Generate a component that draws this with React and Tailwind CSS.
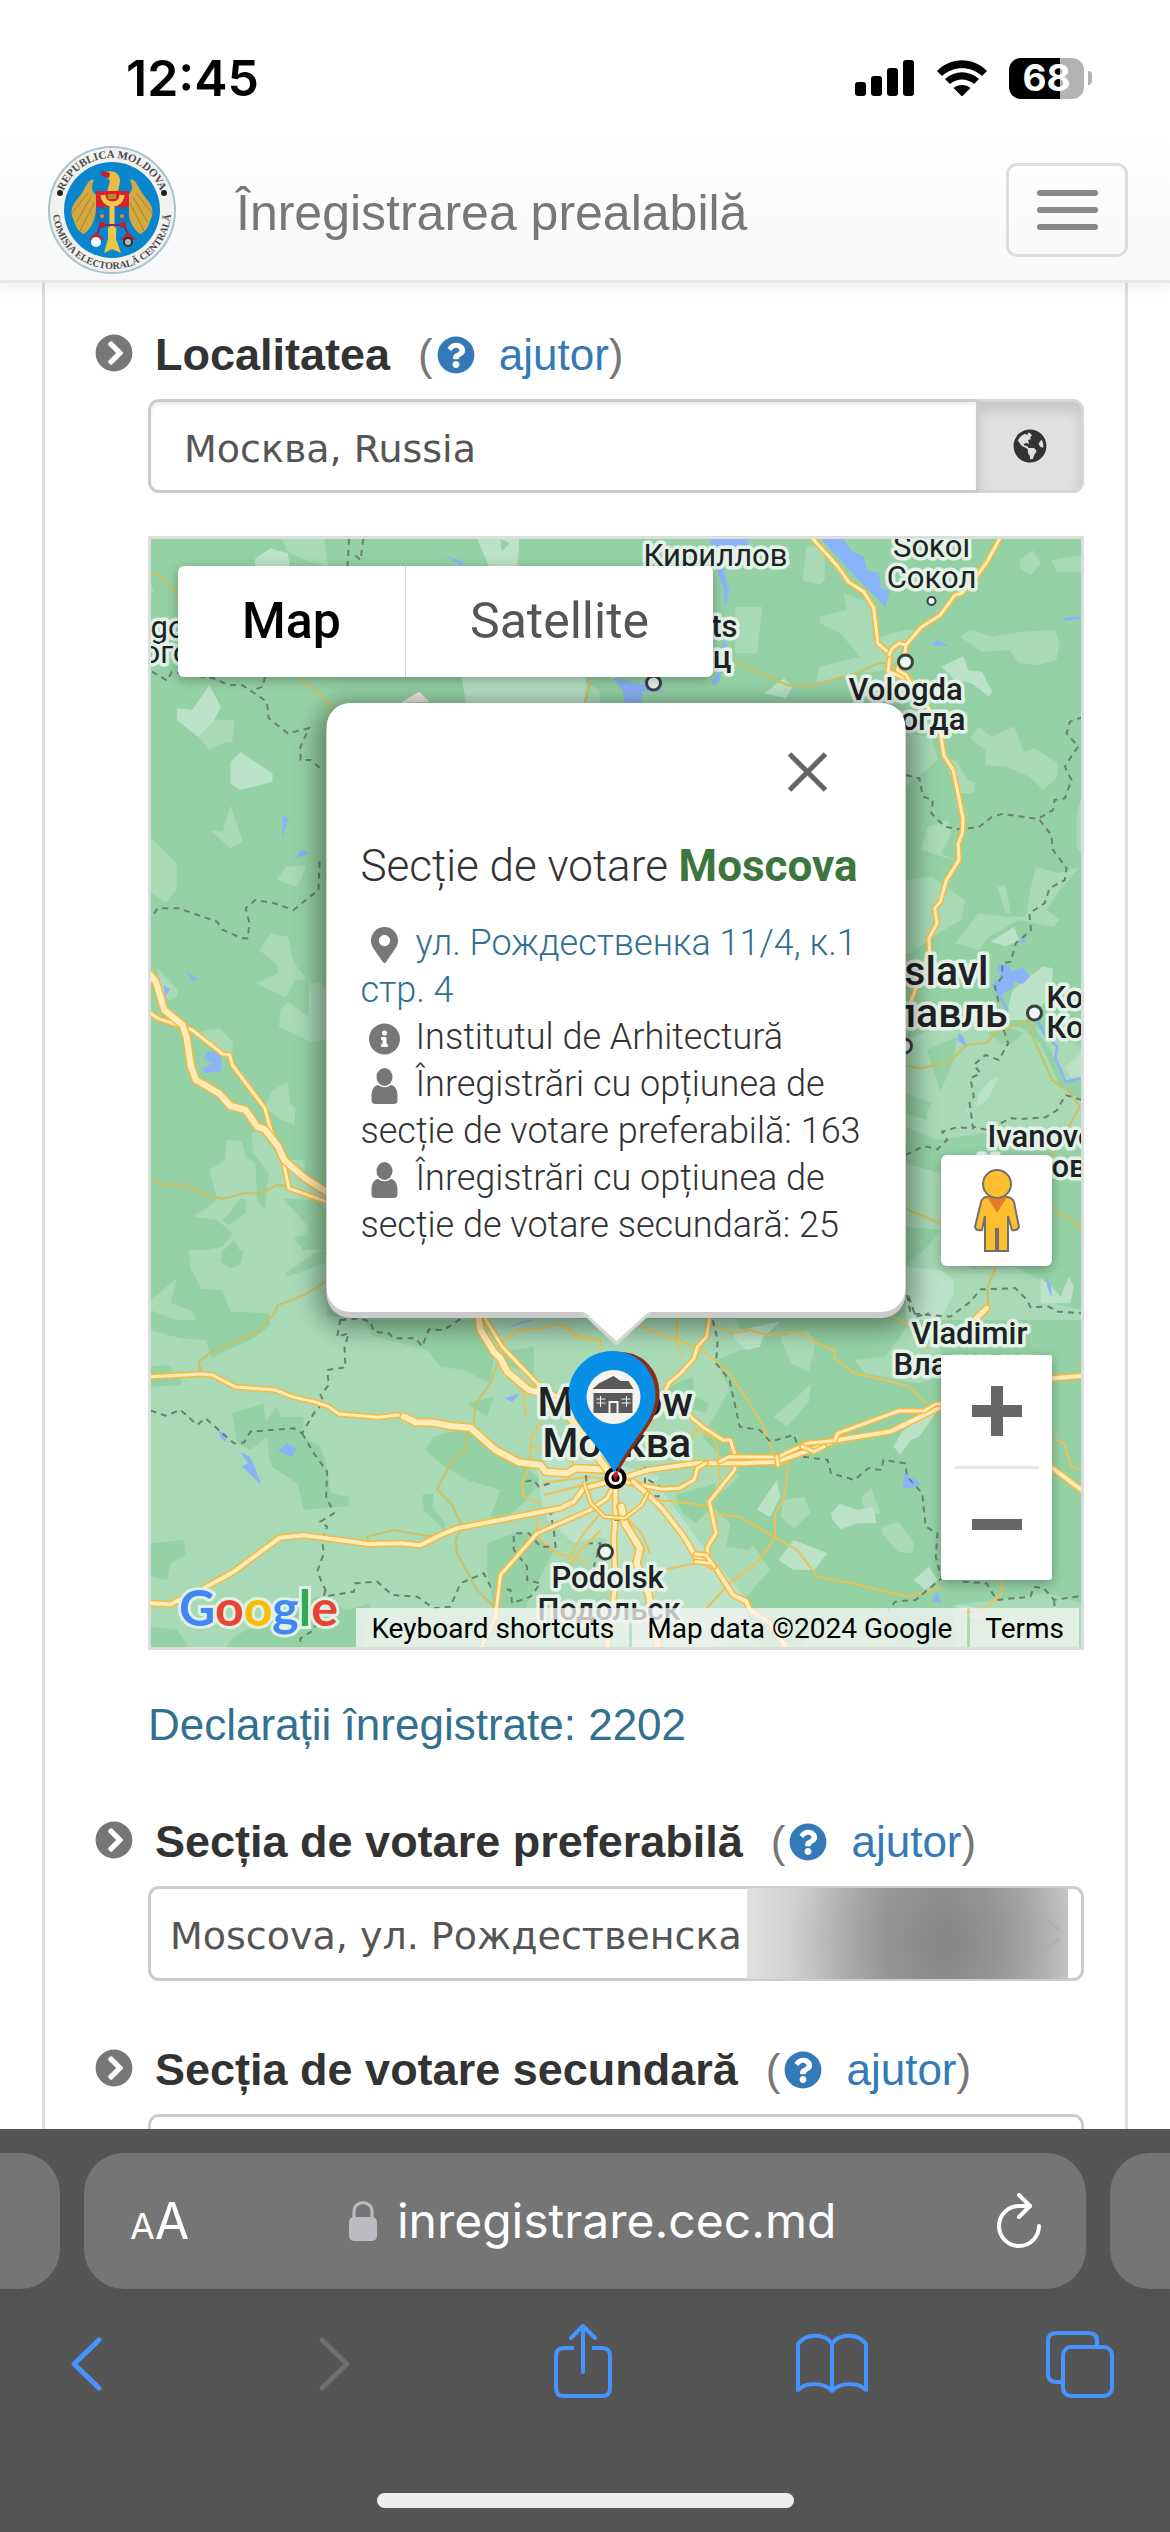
import React, { useState } from 'react';
import { FaChevronCircleRight, FaQuestionCircle, FaGlobeAmericas, FaInfoCircle, FaMapMarkerAlt } from 'react-icons/fa';

const ROAD_CASE = '#f5b942';
const ROAD_FILL = '#ffecb8';

function Road({ d, w = 3 }) {
  return (
    <g fill="none" strokeLinejoin="round" strokeLinecap="round">
      <path d={d} stroke={ROAD_CASE} strokeWidth={w + 3} vectorEffect="non-scaling-stroke" />
      <path d={d} stroke={ROAD_FILL} strokeWidth={w} vectorEffect="non-scaling-stroke" />
    </g>
  );
}

function MinorRoad({ d }) {
  return <path d={d} fill="none" stroke="#cdbf63" strokeWidth="2" vectorEffect="non-scaling-stroke" />;
}

function CityRoad({ d }) {
  return <path d={d} fill="none" stroke="#ecc155" strokeWidth="2" vectorEffect="non-scaling-stroke" />;
}

function Border({ d }) {
  return (
    <path
      d={d}
      fill="none"
      stroke="#69806f"
      strokeWidth="2"
      strokeDasharray="6 5"
      vectorEffect="non-scaling-stroke"
    />
  );
}

function MapDrawing() {
  return (
    <svg
      className="absolute inset-0 h-full w-full"
      viewBox="150 539 931 1108"
      preserveAspectRatio="xMidYMid slice"
      aria-hidden="true"
    >
      <rect x="0" y="400" width="1300" height="1400" fill="#94d2a5" />

      {/* north west */}
      <g transform="translate(140 520) scale(0.3827 0.3333)">
        <g fill="#a8dab5">
          <path d="M370 57L480 57L490 138L430 120L385 95Z" />
          <path d="M190 600L245 600L240 665L215 670L180 690L150 650Z" />
          <path d="M235 855L268 965L235 985L180 930L215 935Z" />
          <path d="M26 950L95 1030L95 1110L65 1150L26 1115Z" />
          <path d="M380 1040L435 1035L410 1100L355 1080Z" />
          <path d="M1150 480L1200 510L1200 548L1100 548Z" />
          <path d="M26 190L35 215L26 220Z" />
        </g>
        <g fill="#bbe2c6">
          <path d="M300 138L300 115L340 85L385 100L390 138Z" />
          <path d="M880 57L990 57L985 138L910 138Z" />
          <path d="M180 495L210 560L190 605L150 650L95 600L95 565L135 570Z" />
          <path d="M262 697L345 760L345 785L260 810L235 790L235 725Z" />
          <path d="M840 470L1165 470L1160 548L850 548Z" />
        </g>
        <path d="M940 57L965 70L945 95Z" fill="#94d2a5" />
        <path d="M680 548L728 515L755 545Z" fill="#f3e7df" />
        <g fill="#8ab4f8">
          <path d="M372 885L387 895L370 955Z" />
          <path d="M403 1018L420 990L443 998Z" />
          <path d="M795 105L845 125L840 138Z" />
          <path d="M1230 470L1300 490L1375 515L1310 515L1310 548L1265 548L1260 510Z" />
        </g>
        <Border d="M30 455L70 482L82 455L190 475L230 495L265 495L330 545L335 595L385 640L440 625L418 680L418 720L445 720L475 750" />
        <Border d="M545 57L541 138M582 57L575 120L555 100M325 470L320 500L295 510" />
        <Border d="M468 1025L465 1110L400 1170L350 1150L300 1140L275 1165L285 1210L280 1255L265 1255L215 1230L200 1205L100 1165L45 1165L30 1190" />
        <MinorRoad d="M26 160L45 160L100 230M415 470L430 490L455 505L505 570M1180 475L1160 548" />
      </g>

      {/* north east */}
      <g transform="translate(640 520) scale(0.3381 0.3333)">
        <g fill="#a8dab5">
          <path d="M490 80L545 75L545 180L530 195L480 180Z" />
          <path d="M600 220L680 250L690 360L740 340L790 330L830 325L780 375L740 450L640 460L520 490L530 440L650 410L590 340L530 310L530 290L610 270Z" />
          <path d="M280 260L360 260L345 400L280 400Z" />
          <path d="M1120 120L1160 90L1185 130L1155 165L1125 150Z" />
          <path d="M1215 120L1305 105L1305 155L1230 155Z" />
          <path d="M945 350L975 330L1040 350L1130 335L1225 330L1240 370L1230 420L1175 435L1120 430L1090 390L1010 395Z" />
          <path d="M975 655L1000 620L1040 650L1105 618L1120 660L1135 695L1165 685L1235 730L1230 775L1190 808L1150 770L1080 740L1020 735L1020 690Z" />
          <path d="M785 640L860 650L880 720L785 800Z" />
          <path d="M930 720L970 780L990 790L985 820L935 820L900 720Z" />
          <path d="M850 920L910 900L920 940L890 1000L940 1025L830 990Z" />
          <path d="M785 1080L860 1070L960 1140L950 1200L880 1240L800 1300L785 1300Z" />
          <path d="M1055 1100L1080 1095L1095 1180L1080 1180Z" />
          <path d="M1170 1040L1235 1060L1300 1040L1240 1110L1200 1170L1240 1200L1220 1220L1120 1200L1030 1250L1000 1290L930 1270L1000 1180L1080 1190L1140 1190L1155 1100Z" />
          <path d="M1290 880L1305 830L1305 1000L1290 985Z" />
        </g>
        <g fill="#bbe2c6">
          <path d="M890 440L955 408L970 450L1010 455L1040 515L1030 530L980 490L930 480Z" />
          <path d="M365 520L425 475L450 500L430 535Z" />
          <path d="M1035 1265L1105 1220L1120 1260L1080 1280Z" />
          <path d="M1190 1340L1220 1345L1215 1430L1140 1500L1080 1500L1100 1410Z" />
        </g>
        <g fill="#8ab4f8">
          <path d="M535 57L600 57L622 90L660 110L670 150L705 160L712 205L737 212L725 262L680 215L640 175Z" />
          <path d="M205 57L320 57L315 90L245 140L262 215L250 265L245 200L225 150Z" />
          <path d="M245 360L258 375L240 400L235 480L222 495L208 490L230 455Z" />
          <path d="M862 372L880 360L910 378L875 378Z" />
          <path d="M1250 295L1275 290L1305 290L1305 297L1255 302Z" />
          <path d="M1055 1332L1090 1335L1095 1355L1130 1342L1152 1370L1130 1392L1105 1385L1100 1405L1065 1425L1092 1475L1080 1470L1040 1395L1065 1370Z" />
          <path d="M1120 1265L1145 1235L1135 1270Z" />
        </g>
        <MinorRoad d="M270 430L300 430L325 450L440 497L520 493L640 460L705 430L740 428L760 440" />
        <Border d="M785 765L825 775L835 830L865 840L860 880L900 920L940 928L1000 922L1040 890L1070 882L1175 897L1220 870L1225 840L1255 835L1275 780L1255 740L1280 700L1295 680L1260 640L1270 605L1305 592" />
        <Border d="M1180 900L1215 945L1220 990L1260 1045L1255 1080L1210 1105L1195 1150L1150 1180L1155 1230L1110 1270L1095 1325L1070 1330L1070 1370L1048 1400L1060 1450" />
        <Road d="M510 57L580 135L615 185L660 215L690 265L702 370L738 402L732 455L800 480L885 620L897 705L925 750L954 895L952 940L940 970L942 1020L905 1080L887 1145L870 1165L877 1210L853 1255L855 1290L800 1445" />
        <Road d="M1062 57L1025 125L990 175L950 220L930 225L887 285L830 322L785 375L765 370L745 385L735 405M785 375L782 400" />
        <Road d="M765 435L760 450L785 465L800 490" />
      </g>

      {/* west */}
      <g transform="translate(140 900) scale(0.3827 0.3333)">
        <g fill="#a8dab5">
          <path d="M310 150L340 100L385 110L400 185L432 235L430 240L405 240L380 293L303 250L360 220L358 195Z" />
          <path d="M45 205L98 270L95 290L75 303L60 280L45 260Z" />
          <path d="M385 305L440 350L440 255L470 245L486 270L486 420L445 425L362 380L365 330Z" />
          <path d="M155 395L205 385L242 425L240 460L220 470L190 440L160 420Z" />
          <path d="M385 545L390 610L405 625L403 675L360 655L325 620L345 570Z" />
          <path d="M225 718L265 725L275 770L300 790L305 900L325 930L335 820L295 760L290 700L310 690L370 780L430 780L430 830L486 890L486 1260L150 1260L148 1235L110 1200L165 1180L130 1100L130 1060L215 1040L240 1000L200 960L138 950L200 900L180 810L220 780Z" />
          <path d="M26 1200L95 1135L80 1200L150 1230L145 1260L26 1260Z" />
        </g>
        <g fill="#94d2a5">
          <path d="M275 900L275 940L230 975L215 960L240 930L260 895Z" />
          <path d="M245 1020L270 1080L255 1110L190 1090L210 1060Z" />
          <path d="M375 1115L430 1060L400 1010L486 1000L486 1090L395 1130Z" />
          <path d="M370 895L460 900L486 930L486 1010L430 1020L440 980L400 930Z" />
        </g>
        <g fill="#8ab4f8">
          <path d="M118 215L150 235L140 247Z" />
          <path d="M60 256L77 268L65 290Z" />
          <path d="M175 455L210 450L212 513L170 520L160 505L190 490L165 473Z" />
          <path d="M26 50L33 50L26 75Z" />
        </g>
        <MinorRoad d="M26 835L60 855L105 852L160 880L215 897L270 880L318 880L355 855L385 858M486 1140L440 1180L415 1185L355 1215L330 1260" />
        <Road d="M26 340L45 355L110 380L135 390L215 462L233 465L240 495L325 625L340 690L370 770L388 865L486 905" w={3} />
        <Road d="M26 225L40 245L62 330L110 375L120 410L132 500L145 540L205 580L235 618L275 630L305 680L325 688L360 740L375 780L430 835L486 875" w={6} />
      </g>

      {/* east */}
      <g transform="translate(740 900) scale(0.3333)">
        <g fill="#a8dab5">
          <path d="M495 420L640 360L840 380L900 430L960 560L1024 600L1024 690L980 720L800 720L730 700L590 720L495 680L495 640L560 660L550 610L495 590Z" />
          <path d="M880 380L1024 440L1024 540L970 545L930 450Z" />
          <path d="M495 790L600 820L600 990L495 980Z" />
          <path d="M560 1040L600 990L605 1060L700 1110L820 1100L900 1140L900 1200L1024 1230L1024 1260L495 1260L495 1100Z" />
        </g>
        <g fill="#bbe2c6">
          <path d="M975 500L1024 455L1024 530L990 530Z" />
          <path d="M775 530L740 600L705 625L715 580L750 540Z" />
          <path d="M495 1100L600 1110L640 1140L640 1180L600 1260L520 1260L495 1240Z" />
          <path d="M900 1135L935 1160L960 1190L985 1130L1000 1160L990 1210L900 1210Z" />
          <path d="M675 620L690 645L680 640Z" />
        </g>
        <g fill="#94d2a5">
          <path d="M560 450L650 410L640 480L600 575Z" />
          <path d="M740 400L800 380L850 400L800 440Z" />
          <path d="M495 580L575 610L545 655L495 640Z" />
        </g>
        <g fill="#8ab4f8">
          <path d="M655 398L668 410L680 442L652 422Z" />
          <path d="M918 1125L932 1160L934 1192L920 1160Z" />
        </g>
        <path d="M890 355L910 400L950 440L945 475L975 545L1024 535" fill="none" stroke="#8ab4f8" strokeWidth="8" />
        <MinorRoad d="M495 497L540 505L625 487L678 435L740 428L765 397L865 360L872 400L935 540L990 580L1018 620L990 670L935 770M495 925L540 945L605 972M935 925L1010 970L1024 1000M768 1097L742 1160L742 1225" />
        <Border d="M790 390L803 430L775 480L735 465L700 495L720 520L690 535L700 590L687 605L697 680L740 690L810 655L840 657L915 652L950 630L975 585L1024 600" />
        <Border d="M495 765L550 738L590 748L620 720L605 695L650 682L700 685" />
        <Border d="M500 1185L510 1240L570 1245L630 1250L690 1205L720 1168L825 1165L860 1200L870 1222L925 1220L950 1235L1024 1240" />
        <Road d="M740 1225L705 1260" w={4} />
      </g>

      {/* fields and forest in the south east */}
      <g transform="translate(560 1250) scale(0.3381 0.3333)">
        <g fill="#a8dab5">
          <path d="M0 207L520 207L560 290L460 330L500 420L420 560L530 680L440 760L580 900L620 960L540 1050L600 1200L0 1200Z" />
        </g>
        <g fill="#94d2a5">
          <path d="M340 735L460 700L450 770L400 820L360 790Z" />
          <path d="M300 420L390 380L400 440L440 460L430 490L330 460Z" />
          <path d="M510 780L590 840L560 900L490 890Z" />
        </g>
        <g fill="#a8dab5">
          <path d="M650 260L730 240L755 280L735 365L680 340Z" />
          <path d="M700 440L740 402L735 455L670 530L630 500Z" />
          <path d="M950 830L1000 815L1045 880L1040 910L1000 905L950 850Z" />
          <path d="M660 750L720 740L740 790L690 835L650 800Z" />
          <path d="M1040 210L1127 300L1127 380L1060 400L900 370L870 330L960 320Z" />
          <path d="M890 740L920 715L945 790L900 795Z" />
          <path d="M1160 1065L1440 1030L1541 1060L1541 1200L1170 1200Z" />
          <path d="M700 1200L760 1120L940 1090L1010 1140L990 1200Z" />
        </g>
        <g fill="#bbe2c6">
          <path d="M510 245L620 220L650 215L600 260L590 290L550 300L515 270Z" />
          <path d="M800 790L825 762L880 780L925 770L935 820L880 820L830 838L805 810Z" />
          <path d="M645 930L690 870L790 910L750 960L690 960Z" />
          <path d="M985 590L1010 545L1060 510L1110 490L1060 560L1035 570L1005 615Z" />
          <path d="M1045 990L1090 950L1115 990L1080 1020Z" />
          <path d="M170 700L300 720L400 860L470 950L560 1060L540 1160L440 1200L200 1200L130 900Z" />
          <path d="M580 780L640 690L650 740L620 800Z" />
          <path d="M1170 1065L1220 1070L1270 1110L1200 1100Z" />
        </g>
        <g fill="#8ab4f8">
          <path d="M1018 668L1070 705L1012 718Z" />
          <path d="M1100 1045L1115 1025L1127 1058L1102 1055Z" />
        </g>
      </g>

      {/* south west */}
      <g transform="translate(140 1250) scale(0.3333)">
        <path
          d="M145 0L560 0L560 200L1300 200L1300 1200L30 1200L30 230L200 225L210 120L150 60Z"
          fill="#a8dab5"
        />
        <g fill="#94d2a5">
          <path d="M150 115L245 120L270 185L385 190L390 225L360 250L330 270L240 310L215 325L195 270L120 265L30 240L30 180L130 220L170 215L150 180L90 160L100 140Z" />
          <path d="M245 0L310 0L300 45L270 55L240 35Z" />
          <path d="M435 70L520 10L555 0L555 40L440 80Z" />
          <path d="M275 490L370 460L375 515L410 470L420 500L490 500L485 560L540 590L560 660L570 730L625 740L625 770L590 770L490 780L470 700L395 650L385 620L380 560L330 600L290 580Z" />
          <path d="M30 350L90 345L95 370L125 390L120 405L30 410Z" />
          <path d="M30 880L130 870L135 915L90 940L80 990L30 980Z" />
          <path d="M670 210L1010 210L1060 320L1050 400L970 360L900 350L860 300L700 260Z" />
          <path d="M855 600L880 560L980 530L1040 570L1080 610L1140 640L1200 690L1150 760L1100 800L1050 800L1080 720L980 690L900 640Z" />
          <path d="M845 735L880 730L875 770L915 820L910 840L850 780Z" />
          <path d="M1040 880L1120 850L1180 850L1240 900L1190 1000L1150 1080L1060 1070L1040 960Z" />
          <path d="M1060 310L1180 290L1180 380L1090 340Z" />
          <path d="M400 1100L530 1040L620 1080L690 1060L660 1200L250 1200L280 1160Z" />
          <path d="M30 1130L110 1140L150 1200L30 1200Z" />
          <path d="M980 460L1060 440L1040 500Z" />
        </g>
        <path d="M1190 640L1320 620L1420 640L1560 680L1480 760L1440 880L1380 860L1300 880L1220 810L1200 740Z" fill="#bbe2c6" />
        <g fill="#8ab4f8">
          <path d="M235 545L255 550L257 578L240 562Z" />
          <path d="M300 607L328 620L345 655L362 705L305 650L322 638Z" />
          <path d="M412 602L440 580L468 595L455 622Z" />
          <path d="M1090 445L1140 430L1115 455Z" />
          <path d="M1095 235L1150 212L1190 207Z" />
        </g>
        <MinorRoad d="M555 95L500 130L455 150L412 165L405 185L350 245L215 305L175 335L180 365M685 875L680 860L760 840L860 858L890 855M1075 330L1050 400L1005 460L1000 520L980 560L975 600L930 640L890 718L935 765L965 830L945 870L950 910L1010 1020L1070 1080" />
        <CityRoad d="M1060 320L1080 280L1130 240L1210 235L1255 220L1320 260L1378 270L1380 290M1200 515L1170 570L1170 640L1145 700L1150 740L1200 760M1155 495L1150 430L1190 400M1190 800L1190 860L1250 910L1340 935M1380 790L1330 850L1280 930M1170 590L1240 600L1300 640M1210 735L1330 705L1425 690M1205 700L1340 680L1425 690" />
        <Border d="M30 482L75 497L120 480L170 525L195 505L280 580L310 578L330 545L460 535L485 550L520 490L550 455L540 435L565 405L560 360L615 352L612 290L625 250L590 260L600 207" />
        <Border d="M485 550L520 610L560 665L557 740L580 790L540 815L560 830L545 870L550 910L530 965L555 1020L565 1037L640 1025L645 1000L710 995L755 1035L830 1040L880 1075L930 1070L960 1000L1030 970L1050 1010L1110 1020L1115 1060L1170 1040L1200 1000L1160 990L1160 950L1120 900L1120 850L1165 850L1200 890L1245 890L1240 840L1230 790L1300 760L1340 720L1335 660" />
        <Border d="M600 210L655 205L690 215L700 245L745 250L760 265L825 265L845 290L865 238L910 240L960 207M555 1020L520 1140L480 1165L478 1195" />
        <Border d="M1155 695L1180 690L1195 710L1230 700M1340 880L1380 880L1360 950" />
        <Road d="M30 380L185 372L215 375L285 411L405 420L460 442L520 455L565 470L595 492L715 502L770 495L790 500" />
        <Road d="M790 500L825 517L880 518L930 528L990 533L1065 600L1135 637L1200 645L1215 665L1280 670L1305 655L1425 660" w={6} />
        <Road d="M30 1060L90 1063L190 1015L280 965L418 863L490 856L685 882L780 880L840 886L900 855L950 835L1180 790L1260 775L1300 755L1330 715L1425 690" w={4} />
        <Road d="M1425 695L1400 745L1350 780L1190 850L1080 975L1065 1100L1020 1200" w={3} />
        <Road d="M1015 207L1020 240L1060 305L1080 325L1100 365L1165 420L1250 440L1300 520L1400 660" w={6} />
        <Road d="M1035 207L1085 290L1190 400L1250 440" w={3} />
        <Road d="M1425 695L1425 800L1420 870L1425 1000L1400 1195" w={4} />
        <Road d="M1440 770L1460 830L1500 900L1480 960" w={6} />
      </g>

      {/* roads in the south east */}
      <g transform="translate(560 1250) scale(0.3381 0.3333)">
        <CityRoad d="M0 225L60 265L115 270L120 300M190 245L230 210M210 215L280 250L350 270L420 300L500 370L560 460L600 530L630 610M460 230L510 250L560 240L610 255L700 245L760 280L810 300L810 325L870 370L960 390L1030 410L1060 440L1080 460M345 207L345 280L360 320M640 640L675 640L660 750L635 790L635 860L590 930L500 1000L410 1100M440 790L530 800L630 860L700 900L760 980L860 1000L940 1020L1030 1040L1127 1010M280 750L350 755L440 770M300 960L400 940L430 930M0 990L60 900L120 840M200 810L240 850L265 910M470 690L465 600L450 560L400 540L370 590L400 640M965 190L1040 230L1090 300M1460 565L1490 580L1510 650L1541 660M1305 990L1305 1030L1250 1080L1180 1090" />
        <Border d="M450 210L465 270L460 340L500 390L530 530L590 540L620 575L690 555L715 620L790 630L800 670L870 690L910 655L950 660L955 630L1020 640L1025 680L1070 730L1080 830L1115 850L1110 920L1127 985L1050 1050L990 1055L970 1080" />
        <Border d="M1030 140L1050 200L1090 190M250 650L250 750L190 810L150 810M260 690L295 710L290 740L265 735M1190 995L1260 1000L1290 1050L1390 1040L1400 1010L1430 1015L1460 1050L1541 1038M1460 1050L1462 1080" />
        <Road d="M440 207L432 260L405 290L395 325L355 370L320 400L290 470L200 600" w={3} />
        <Road d="M330 440L390 505L420 530L480 570L502 570L518 620L515 660L440 755L460 850L435 890L435 930" w={3} />
        <Road d="M163 690L260 660L400 640L540 640L640 635L740 600L820 570L975 545L1127 470" w={4} />
        <Road d="M470 635L500 620L640 622L730 580L810 572L820 550L1000 483L1075 483L1110 462L1127 462" w={3} />
        <Road d="M163 690L300 718L350 715L395 690L405 655L430 640" w={3} />
        <Road d="M640 620L643 645M715 590L750 605L780 590" w={3} />
        <Road d="M215 695L260 735L300 775L365 860L400 920L460 955L510 1035L550 1055L560 1080L620 1120L670 1195" w={4} />
        <Road d="M400 912L430 915L455 950M400 935L440 940" w={3} />
        <Road d="M180 770L190 820L235 895L225 940L260 1030L290 1195" w={6} />
        <Road d="M70 700L90 760L130 800L190 805L240 765L258 730" w={2} />
        <Road d="M1456 385L1541 378M1456 655L1541 720" w={4} />
        <Road d="M1230 205L1260 175" w={5} />
      </g>

      {/* town markers */}
      <g fill="#eef6f0" stroke="#3c4043" strokeWidth="3">
        <circle cx="931" cy="601" r="4" strokeWidth="2" />
        <circle cx="905" cy="662" r="7" />
        <circle cx="653" cy="683" r="7" />
        <circle cx="1034" cy="1013" r="7" />
        <circle cx="904" cy="1046" r="7" />
        <circle cx="605" cy="1552" r="7" />
      </g>

      <g
        className="font-['Roboto',sans-serif]"
        fill="#202124"
        stroke="#e4f3e8"
        strokeWidth="7"
        strokeLinejoin="round"
        paintOrder="stroke"
        fontSize="31"
      >
        <text x="643" y="566">Кириллов</text>
        <text x="931" y="557" textAnchor="middle">Sokol</text>
        <text x="931" y="588" textAnchor="middle">Сокол</text>
        <text x="150" y="638">go</text>
        <text x="142" y="663">ого</text>
        <g fontWeight="500">
          <text x="737" y="637" textAnchor="end">Cherepovets</text>
          <text x="731" y="668" textAnchor="end">Череповец</text>
          <text x="848" y="700">Vologda</text>
          <text x="965" y="730" textAnchor="end">Вологда</text>
          <text x="1046" y="1008">Kostroma</text>
          <text x="1046" y="1038">Кострома</text>
          <text x="987" y="1147">Ivanovo</text>
          <text x="977" y="1177">Иваново</text>
          <text x="911" y="1344">Vladimir</text>
          <text x="893" y="1375">Владимир</text>
          <text x="551" y="1588">Podolsk</text>
          <text x="537" y="1620">Подольск</text>
        </g>
        <g fontWeight="500" fontSize="41">
          <text x="988" y="985" textAnchor="end">Yaroslavl</text>
          <text x="1007" y="1027" textAnchor="end">Ярославль</text>
          <text x="537" y="1416">Moscow</text>
          <text x="542" y="1457">Москва</text>
        </g>
      </g>

      {/* polling station pin */}
      <circle cx="615" cy="1478" r="9" fill="#fff" stroke="#000" strokeWidth="4" />
      <circle cx="615" cy="1478" r="4" fill="#000" />
      <path d="M619 1352C645 1352 660 1373 659 1396C658 1422 633 1442 617 1474Z" fill="#8a2f16" />
      <path d="M612 1351C587 1351 568 1371 568 1395C568 1422 596 1440 614 1473C630 1440 655 1422 655 1395C655 1371 637 1351 612 1351Z" fill="#078fe8" />
      <circle cx="613" cy="1397" r="27" fill="#f5f4ef" />
      <g fill="#58595b">
        <path d="M592 1389L599 1383L613 1376L620 1381L628 1381L633 1389Z" />
        <path d="M593 1393H632V1413H618V1401H608V1413H593Z" />
        <path d="M610 1403H616V1413H610Z" />
      </g>
      <g stroke="#f5f4ef" strokeWidth="1">
        <path d="M596 1399H605M596 1403H605M600 1396V1407M621 1399H630M621 1403H630M626 1396V1407" />
      </g>
      <path d="M612 1475L615 1481L618 1475L616 1471Z" fill="#c4161c" />
    </svg>
  );
}

function CecLogo() {
  return (
    <svg className="h-[130px] w-[130px]" viewBox="0 0 130 130" role="img" aria-label="CEC">
      <defs>
        <path id="ringTop" d="M13 65A52 52 0 0 1 117 65" />
        <path id="ringBottom" d="M6 65A59 59 0 0 0 124 65" />
      </defs>
      <circle cx="65" cy="65" r="63" fill="#f1f1f0" stroke="#a9c3cf" strokeWidth="2" />
      <circle cx="65" cy="65" r="48" fill="#0a86cd" />
      <g fill="#4a4a4a" fontSize="11" fontWeight="700" fontFamily="Liberation Serif, serif" textAnchor="middle">
        <text>
          <textPath href="#ringTop" startOffset="50%">REPUBLICA MOLDOVA</textPath>
        </text>
        <text fontSize="10">
          <textPath href="#ringBottom" startOffset="50%">COMISIA ELECTORALĂ CENTRALĂ</textPath>
        </text>
      </g>
      <circle cx="13" cy="48" r="3" fill="#222" />
      <circle cx="117" cy="48" r="3" fill="#222" />
      <g fill="#d3a941">
        <path d="M47 35C41 32 39 44 32 52C25 60 22 66 27 76C29 83 32 87 37 89C44 84 49 74 49 62V50C44 46 44 42 47 35Z" />
        <path d="M83 35C89 32 91 44 98 52C105 60 108 66 103 76C101 83 98 87 93 89C86 84 81 74 81 62V50C86 46 86 42 83 35Z" />
        <path d="M57 29C62 24 73 26 73 36L71 47H60L63 36Z" fill="#e9bd3f" />
        <path d="M61 60H70L69 94L74 108L65 104L57 108L61 94Z" fill="#f0c443" />
      </g>
      <g stroke="#a98232" strokeWidth="1" fill="none">
        <path d="M41 48L25 68M44 52L29 78M47 58L33 86M89 48L105 68M86 52L101 78M83 58L97 86" />
      </g>
      <path d="M49 46H82V62H49Z" fill="#d91f30" />
      <path d="M49 62H82V76L65 84L49 76Z" fill="#0f76ba" />
      <path d="M56 50C57 62 74 62 75 50M65 60V92" stroke="#f2c94c" strokeWidth="5" fill="none" />
      <path d="M61 49H69V54H61Z" fill="#b98a28" />
      <path d="M54 80H77M54 80L49 92M77 80L82 92" stroke="#6d2f68" strokeWidth="2" />
      <circle cx="55" cy="80" r="3" fill="#c41f2c" />
      <circle cx="76" cy="80" r="3" fill="#c41f2c" />
      <circle cx="55" cy="71" r="2" fill="#c99b35" />
      <circle cx="75" cy="71" r="2" fill="#c99b35" />
      <path d="M54 26L63 28L62 33L55 31Z" fill="#c41f2c" />
      <path d="M42 95L49 87L57 95Z" fill="#c41f2c" />
      <path d="M74 95L81 87L89 95Z" fill="#c41f2c" />
      <circle cx="49" cy="97" r="5" fill="#fff" />
      <circle cx="81" cy="97" r="4" fill="#bbb" stroke="#333" strokeWidth="2" />
    </svg>
  );
}

function UserIcon() {
  return (
    <svg className="h-[37px] w-8" viewBox="0 0 32 37" fill="#777" aria-hidden="true">
      <ellipse cx="16" cy="9" rx="8" ry="9" />
      <path d="M3 28C3 21 6 17 10 17C13 20 19 20 22 17C26 17 29 21 29 28V32Q29 36 25 36H7Q3 36 3 32Z" />
    </svg>
  );
}

function StatusBar() {
  return (
    <div className="flex h-[140px] items-center justify-between pt-4 pr-[78px] pl-[126px]">
      <span className="font-['Inter',sans-serif] text-[50px] font-semibold text-black">12:45</span>
      <div className="flex items-center gap-[22px]">
        <svg className="h-9 w-[60px]" viewBox="0 0 60 36" aria-hidden="true">
          <rect x="0" y="22" width="11" height="14" rx="3" />
          <rect x="16" y="16" width="11" height="20" rx="3" />
          <rect x="32" y="8" width="11" height="28" rx="3" />
          <rect x="48" y="0" width="11" height="36" rx="3" />
        </svg>
        <svg className="h-9 w-[50px]" viewBox="0 0 50 36" aria-hidden="true">
          <path d="M0 11C14 -3.500 36 -3.500 50 11L45 16C34 5.500 16 5.500 5 16Z" />
          <path d="M8 19C18 10 32 10 42 19L37 24C30 18 20 18 13 24Z" />
          <path d="M16.500 28C21 24 29 24 33.500 28L25 36.500Z" />
        </svg>
        <div className="flex items-center gap-1">
          <span className="flex h-[41px] w-[75px] items-center justify-center rounded-[12px] bg-[linear-gradient(to_right,#000_68%,#b3b3b3_68%)] font-['Inter',sans-serif] text-[37px] font-bold text-white">
            68
          </span>
          <span className="h-[14px] w-[4px] rounded-r-full bg-[#b3b3b3]" />
        </div>
      </div>
    </div>
  );
}

function FieldLabel({ htmlFor, children }) {
  return (
    <div className="flex h-[60px] items-center">
      <FaChevronCircleRight className="h-[38px] w-[38px] text-[#777]" />
      <label htmlFor={htmlFor} className="ml-[22px] pt-[3px] text-[45px] font-bold text-[#333]">
        {children}
      </label>
      <span className="ml-7 flex items-center pt-[3px] text-[44px] text-[#777]">
        (
        <a href="#ajutor" className="ml-1 flex items-center gap-6 text-[#337ab7]">
          <FaQuestionCircle className="h-[38px] w-[38px]" />
          ajutor
        </a>
        )
      </span>
    </div>
  );
}

function RowIcon({ children }) {
  return <span className="inline-flex w-[55px] pl-2 align-middle">{children}</span>;
}

function InfoWindow({ onClose }) {
  return (
    <div className="absolute top-[164px] left-1/2 h-[609px] w-[579px] -translate-x-1/2 rounded-[24px] bg-white px-[34px] font-['Roboto',sans-serif] text-[36px] leading-[47px] font-light text-[#333] shadow-[0_6px_0_#cacaca,0_8px_24px_8px_rgba(0,0,0,0.4)]">
      <div className="flex justify-end pt-[45px]">
        <button type="button" aria-label="Close" onClick={onClose} className="mr-10 flex h-12 w-12 items-center justify-center">
          <svg className="h-10 w-10" viewBox="0 0 40 40" stroke="#666" strokeWidth="5">
            <path d="M2 2L38 38M38 2L2 38" />
          </svg>
        </button>
      </div>
      <h3 className="mt-10 text-[44px] leading-[60px] whitespace-nowrap">
        Secție de votare <b className="font-bold text-[#3c763d]">Moscova</b>
      </h3>
      <div className="mt-6">
        <RowIcon>
          <FaMapMarkerAlt className="h-[36px] w-8 text-[#777]" />
        </RowIcon>
        <a href="#harta" className="text-[#31708f]">ул. Рождественка 11/4, к.1 стр. 4</a>
      </div>
      <div>
        <RowIcon>
          <FaInfoCircle className="h-8 w-8 text-[#777]" />
        </RowIcon>
        Institutul de Arhitectură
      </div>
      <div>
        <RowIcon><UserIcon /></RowIcon>
        Înregistrări cu opțiunea de secție de votare preferabilă: 163
      </div>
      <div>
        <RowIcon><UserIcon /></RowIcon>
        Înregistrări cu opțiunea de secție de votare secundară: 25
      </div>
      <svg className="absolute top-full left-1/2 h-[34px] w-[72px] -translate-x-1/2" viewBox="0 0 72 34">
        <path d="M0 0H72L36 34Z" fill="#d4d4d4" />
        <path d="M4 0H68L36 29Z" fill="#fff" />
        <path d="M4 -1H68V1H4Z" fill="#fff" />
      </svg>
    </div>
  );
}

function MapPanel() {
  const [open, setOpen] = useState(true);

  return (
    <div className="relative mt-[43px] ml-[53px] h-[1114px] overflow-hidden border-[3px] border-[#ddd] font-['Roboto',sans-serif]">
      <MapDrawing />

      {open && <InfoWindow onClose={() => setOpen(false)} />}

      <div className="absolute top-[27px] left-[27px] flex h-[111px] overflow-hidden rounded-[6px] bg-white text-[50px] shadow-[0_3px_12px_rgba(0,0,0,0.3)]">
        <button type="button" className="w-[228px] border-r border-[#d0d0d0] font-medium text-black">Map</button>
        <button type="button" className="w-[307px] text-[#565656]">Satellite</button>
      </div>

      <div className="absolute right-[29px] bottom-[67px] flex w-[111px] flex-col gap-[89px]">
        <button
          type="button"
          aria-label="Street View"
          className="flex h-[111px] items-center justify-center rounded-[6px] bg-white shadow-[0_3px_12px_rgba(0,0,0,0.3)]"
        >
          <svg className="h-[84px] w-[48px]" viewBox="0 0 48 84" stroke="#72706f" strokeWidth="2">
            <path
              d="M14 28H33Q39 28 41 33L46 58Q44 62 39 61L35 47V82H25V60H23V82H12V47L9 61Q3 62 2 58L8 33Q10 28 14 28Z"
              fill="#fdbf2d"
            />
            <path d="M14 28H34L24 44Z" fill="#e27d2c" stroke="none" />
            <circle cx="24" cy="15" r="14" fill="#fdbf2d" />
          </svg>
        </button>
        <div className="flex flex-col items-center rounded-[3px] bg-white shadow-[0_3px_12px_rgba(0,0,0,0.3)]">
          <button type="button" aria-label="Zoom in" className="flex h-[111px] w-full items-center justify-center">
            <svg className="h-[50px] w-[50px]" viewBox="0 0 50 50" fill="#666">
              <path d="M19 0H31V19H50V31H31V50H19V31H0V19H19Z" />
            </svg>
          </button>
          <span className="h-[3px] w-[84px] bg-[#e6e6e6]" />
          <button type="button" aria-label="Zoom out" className="flex h-[111px] w-full items-center justify-center">
            <span className="h-[11px] w-[50px] bg-[#666]" />
          </button>
        </div>
      </div>

      <a
        href="#google"
        className="absolute bottom-[10px] left-[28px] font-['Lato',sans-serif] text-[50px] leading-[60px] font-bold [paint-order:stroke] [-webkit-text-stroke:6px_#dff0e4]"
      >
        <span className="text-[#4285f4]">G</span>
        <span className="text-[#ea4335]">o</span>
        <span className="text-[#fbbc04]">o</span>
        <span className="text-[#4285f4]">g</span>
        <span className="text-[#34a853]">l</span>
        <span className="text-[#ea4335]">e</span>
      </a>

      <div className="absolute right-[2px] bottom-0 flex h-[39px] gap-[3px] text-[28px] leading-[42px] whitespace-nowrap text-black">
        <button type="button" className="bg-[#f5f5f5]/75 px-[15px]">Keyboard shortcuts</button>
        <span className="bg-[#f5f5f5]/75 px-[15px]">Map data ©2024 Google</span>
        <a href="#terms" className="bg-[#f5f5f5]/75 px-[15px]">Terms</a>
      </div>
    </div>
  );
}

function BrowserBar() {
  return (
    <footer className="relative flex h-[403px] shrink-0 flex-col bg-[#555] pt-6">
      <div className="flex h-[136px] gap-6 shadow-[0_0_24px_rgba(0,0,0,0.1)]">
        <div className="w-[60px] shrink-0 rounded-r-[40px] bg-[#757575]" />
        <div className="flex min-w-0 flex-1 items-center justify-between rounded-[40px] bg-[#757575] pr-[44px] pl-[46px] font-['Inter',sans-serif] text-white">
          <button type="button" aria-label="Page settings" className="flex items-baseline">
            <span className="text-[36px]">A</span>
            <span className="text-[50px]">A</span>
          </button>
          <div className="flex items-center gap-5">
            <svg className="h-10 w-7" viewBox="0 0 28 40" aria-hidden="true">
              <path d="M5 18V10C5 -1 23 -1 23 10V18" fill="none" stroke="#bcbbc2" strokeWidth="3" />
              <rect x="0" y="16" width="28" height="24" rx="5" fill="#bcbbc2" />
            </svg>
            <span className="text-[48px]">inregistrare.cec.md</span>
          </div>
          <button type="button" aria-label="Reload" className="flex">
            <svg className="h-[56px] w-[46px]" viewBox="0 0 46 56" fill="none" stroke="#fff" strokeWidth="4" strokeLinecap="round" strokeLinejoin="round">
              <path d="M43 33A20 20 0 1 1 23 13H34" />
              <path d="M23 2L34 13L23 24" />
            </svg>
          </button>
        </div>
        <div className="w-[60px] shrink-0 rounded-l-[40px] bg-[#757575]" />
      </div>

      <nav
        className="flex justify-between pt-[34px] pr-[54px] pl-[50px] text-[#4793ff]"
        aria-label="Browser"
      >
        <button type="button" aria-label="Back" className="flex w-[72px] justify-center">
          <svg className="h-20 w-9" viewBox="0 0 36 80" fill="none" stroke="currentColor" strokeWidth="5" strokeLinecap="round" strokeLinejoin="round">
            <path d="M31 17L6 41L31 65" />
          </svg>
        </button>
        <button type="button" aria-label="Forward" className="flex w-[72px] justify-center text-[#6f6f6f]">
          <svg className="h-20 w-9" viewBox="0 0 36 80" fill="none" stroke="currentColor" strokeWidth="5" strokeLinecap="round" strokeLinejoin="round">
            <path d="M5 17L30 41L5 65" />
          </svg>
        </button>
        <button type="button" aria-label="Share" className="flex w-[72px] justify-center">
          <svg className="h-20 w-[58px]" viewBox="0 0 58 80" fill="none" stroke="currentColor" strokeWidth="4" strokeLinecap="round" strokeLinejoin="round">
            <path d="M20 25H10Q2 25 2 33V65Q2 73 10 73H48Q56 73 56 65V33Q56 25 48 25H38" strokeLinecap="butt" />
            <path d="M29 49V4M17 15L29 3L41 15" />
          </svg>
        </button>
        <button type="button" aria-label="Bookmarks" className="flex w-[72px] justify-center">
          <svg className="h-20 w-[72px]" viewBox="0 0 72 80" fill="none" stroke="currentColor" strokeWidth="4" strokeLinecap="round" strokeLinejoin="round">
            <path d="M36 21C29 10 10 10 2 21V67C11 59 28 59 36 68C44 59 61 59 70 67V21C62 10 43 10 36 21ZM36 21V68" />
          </svg>
        </button>
        <button type="button" aria-label="Tabs" className="flex w-[72px] justify-center">
          <svg className="h-20 w-[70px]" viewBox="0 0 70 80" fill="none" stroke="currentColor" strokeWidth="4" strokeLinejoin="round">
            <rect x="18" y="24" width="49" height="49" rx="8" />
            <path d="M18 59H12Q3 59 3 51V18Q3 10 11 10H44Q52 10 52 18V24" />
          </svg>
        </button>
      </nav>

      <span className="mx-auto mt-auto mb-6 h-[15px] w-[417px] rounded-full bg-[#eee]" />
    </footer>
  );
}

export default function App() {
  const [place, setPlace] = useState('Москва, Russia');

  return (
    <div className="flex h-screen flex-col overflow-hidden bg-white font-['Liberation_Sans',sans-serif]">
      <header className="relative z-10 shrink-0 border-b-[3px] border-[#e7e7e7] bg-white shadow-[0_3px_14px_rgba(0,0,0,0.08)]">
        <StatusBar />
        <div className="flex h-[140px] items-center bg-linear-to-b from-white to-[#f8f8f8] pr-[42px] pl-[47px]">
          <CecLogo />
          <a href="#acasa" className="ml-[59px] pt-[6px] text-[50px] text-[#777]">Înregistrarea prealabilă</a>
          <button
            type="button"
            aria-label="Meniu"
            className="ml-auto flex h-[94px] w-[122px] flex-col items-center justify-center gap-[11px] rounded-[11px] border-[3px] border-[#ddd]"
          >
            <span className="h-[6px] w-[61px] rounded-full bg-[#888]" />
            <span className="h-[6px] w-[61px] rounded-full bg-[#888]" />
            <span className="h-[6px] w-[61px] rounded-full bg-[#888]" />
          </button>
        </div>
      </header>

      <main className="mx-[42px] min-h-0 flex-1 overflow-hidden border-x-[3px] border-[#ddd] pt-10 pr-[41px] pl-[50px]">
        <FieldLabel htmlFor="localitatea">Localitatea</FieldLabel>
        <div className="mt-4 ml-[53px] flex h-[94px]">
          <input
            id="localitatea"
            type="text"
            value={place}
            onChange={(e) => setPlace(e.target.value)}
            className="min-w-0 flex-1 rounded-l-[11px] border-[3px] border-[#ccc] px-[33px] pt-[6px] font-['DejaVu_Sans',sans-serif] text-[38px] text-[#555] shadow-[inset_0_3px_3px_rgba(0,0,0,0.07)]"
          />
          <button
            type="button"
            aria-label="Caută pe hartă"
            className="flex w-[105px] items-center justify-center rounded-r-[11px] border-y-[3px] border-r-[3px] border-[#d6d6d6] bg-[#e0e0e0] shadow-[inset_0_8px_14px_rgba(0,0,0,0.12)]"
          >
            <FaGlobeAmericas className="h-[34px] w-[34px] text-[#333]" />
          </button>
        </div>

        <MapPanel />

        <p className="mt-[45px] ml-[53px] h-[60px] text-[44px] leading-[60px] text-[#31708f]">
          Declarații înregistrate: 2202
        </p>

        <div className="mt-[55px]">
          <FieldLabel htmlFor="preferabila">Secția de votare preferabilă</FieldLabel>
        </div>
        <div className="relative mt-4 ml-[53px] h-[95px]">
          <select
            id="preferabila"
            className="h-full w-full appearance-none rounded-[11px] border-[3px] border-[#ccc] bg-white px-[19px] pt-[6px] font-['DejaVu_Sans',sans-serif] text-[38px] text-[#555]"
          >
            <option>Moscova, ул. Рождественска</option>
          </select>
          <div className="pointer-events-none absolute inset-y-[2px] right-[16px] flex w-[321px] items-center justify-end bg-[radial-gradient(ellipse_160px_140px_at_62%_60%,rgba(125,126,128,0.7),transparent),linear-gradient(to_right,#e0e0e0_0%,#c9c9c9_22%,#a6a7a9_43%,#98999b_62%,#aeaeb0_82%,#cfcfcf_100%)] pr-[7px]">
            <svg className="h-[30px] w-6" viewBox="0 0 24 30" fill="none" stroke="#b0b0b2" strokeWidth="3" aria-hidden="true">
              <path d="M2 11L12 2L22 11M2 19L12 28L22 19" />
            </svg>
          </div>
        </div>

        <div className="mt-[57px]">
          <FieldLabel htmlFor="secundara">Secția de votare secundară</FieldLabel>
        </div>
        <div className="mt-4 ml-[53px] h-[95px]">
          <select
            id="secundara"
            className="h-full w-full appearance-none rounded-[11px] border-[3px] border-[#ccc] bg-white px-[19px]"
          />
        </div>
      </main>

      <BrowserBar />
    </div>
  );
}
